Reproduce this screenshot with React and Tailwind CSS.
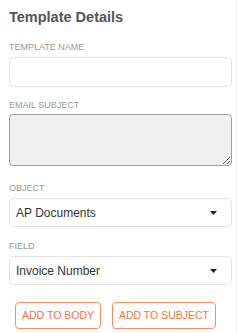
import React from "react";

function Caret() {
    return (
        <svg width="7" height="4" viewBox="0 0 7 4" className="shrink-0">
            <path d="M0 0 L7 0 L3.5 4 Z" fill="#222" />
        </svg>
    );
}

function SelectBox({ value }) {
    return (
        <div className="flex h-[29px] items-center justify-between rounded-[5px] border border-[#e3e3e3] bg-white pl-[6px] pr-[14px]">
            <span className="text-[12px] text-[#333]">{value}</span>
            <Caret />
        </div>
    );
}

function Label({ children }) {
    return <div className="text-[9px] leading-[11px] text-[#999]">{children}</div>;
}

export default function App() {
    return (
        <div
            className="h-[333px] w-[237px] border-r border-[#eeeeee] bg-white pl-[9px] pr-[4px]"
            style={{ fontFamily: "'Liberation Sans', Arial, sans-serif" }}
        >
            <h2 className="pt-[9px] text-[14.5px] font-bold leading-[17px] text-[#555]">
                Template Details
            </h2>

            <div className="mt-[16px]">
                <Label>TEMPLATE NAME</Label>
                <div className="mt-[4px] h-[30px] rounded-[5px] border border-[#e3e3e3] bg-white" />
            </div>

            <div className="mt-[13px]">
                <Label>EMAIL SUBJECT</Label>
                <textarea
                    className="mt-[3px] block h-[52px] w-full resize-y rounded-[4px] border border-[#a0a0a0] bg-[#f0f0f0]"
                    readOnly
                />
            </div>

            <div className="mt-[17px]">
                <Label>OBJECT</Label>
                <div className="mt-[4px]">
                    <SelectBox value="AP Documents" />
                </div>
            </div>

            <div className="mt-[14px]">
                <Label>FIELD</Label>
                <div className="mt-[4px]">
                    <SelectBox value="Invoice Number" />
                </div>
            </div>

            <div className="mt-[17px] flex gap-[11px] pl-[6px]">
                <button className="h-[27px] w-[86px] rounded-[4px] border border-[#ff8a5c] text-[10.5px] text-[#ff6f3c]">
                    ADD TO BODY
                </button>
                <button className="h-[27px] w-[104px] rounded-[4px] border border-[#ff8a5c] text-[10.5px] text-[#ff6f3c]">
                    ADD TO SUBJECT
                </button>
            </div>
        </div>
    );
}
